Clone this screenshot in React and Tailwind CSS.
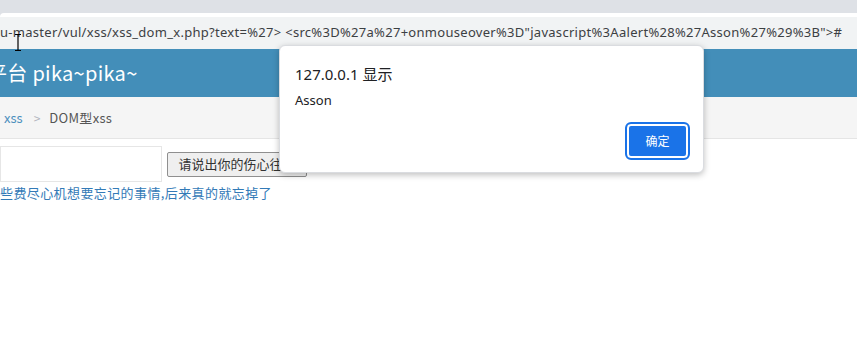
export default function App() {
  const ui = { fontFamily: '"Noto Sans", "Noto Sans CJK SC", sans-serif' };
  const cjk = { fontFamily: '"Noto Sans CJK SC", "Noto Sans", sans-serif' };
  const url =
    'u-master/vul/xss/xss_dom_x.php?text=%27> <src%3D%27a%27+onmouseover%3D"javascript%3Aalert%28%27Asson%27%29%3B">#';

  return (
    <div className="relative h-[362px] w-[857px] overflow-hidden bg-white" style={ui}>
      {/* browser chrome */}
      <div className="h-[13px] bg-[#dee1e6]" />
      <div className="bg-[#dee1e6]">
        <div className="h-[4px] rounded-tl-[6px] bg-white" />
      </div>
      <div className="flex h-[32px] items-center bg-[#f1f3f4]">
        <span className="whitespace-nowrap text-[13px] tracking-[0.29px] text-[#3c4043]">{url}</span>
      </div>

      {/* page header */}
      <div className="flex h-[48px] items-center bg-[#438eb9]" style={cjk}>
        <span className="ml-[-13px] whitespace-nowrap text-[20px] tracking-[0.3px] text-white">平台 pika~pika~</span>
      </div>

      {/* breadcrumb */}
      <div className="flex h-[42px] items-center gap-[11px] border-b border-[#e5e5e5] bg-[#f5f5f5] pl-[4px] text-[13px]" style={cjk}>
        <span className="text-[#4c8fbd]">xss</span>
        <span className="text-[12px] text-[#b2b6bf]">&gt;</span>
        <span className="ml-[-2px] tracking-[0.3px] text-[#555]">DOM型xss</span>
      </div>

      {/* content */}
      <div className="pt-[7px]" style={cjk}>
        <div className="flex items-center gap-[5px]">
          <div className="h-[36px] w-[162px] border border-[#e6e6e6] bg-white" />
          <button className="h-[25px] w-[140px] rounded-[2px] border border-[#8f8f8f] bg-[#efefef] text-[13px] text-[#333]">
            请说出你的伤心往事
          </button>
        </div>
        <div className="mt-[2px] whitespace-nowrap text-[13px] leading-[18px] tracking-[0.4px] text-[#337ab7]">
          些费尽心机想要忘记的事情,后来真的就忘掉了
        </div>
      </div>

      {/* text cursor */}
      <svg className="absolute left-[14px] top-[34px]" width="8" height="17" viewBox="0 0 8 17">
        <path d="M1 0.5h6M4 0.5v16M1 16.5h6" stroke="#000" strokeWidth="1.2" fill="none" />
      </svg>

      {/* alert dialog */}
      <div className="absolute left-[279px] top-[45px] h-[128px] w-[425px] rounded-[6px] border border-[#dadce0] bg-white shadow-[0_2px_6px_rgba(0,0,0,0.25)]">
        <div className="flex h-full flex-col px-[15px] pt-[17px]">
          <div className="text-[15px] leading-[22px] text-[#202124]" style={ui}>
            127.0.0.1 <span style={cjk}>显示</span>
          </div>
          <div className="mt-[6px] text-[13px] leading-[18px] text-[#202124]">Asson</div>
          <div className="mt-auto mb-[14px] flex justify-end">
            <button
              className="h-[34px] w-[61px] rounded-[4px] bg-[#1a73e8] text-[12px] text-white ring-2 ring-inset ring-white outline outline-2 outline-[#1a73e8]"
              style={cjk}
            >
              确定
            </button>
          </div>
        </div>
      </div>
    </div>
  );
}
